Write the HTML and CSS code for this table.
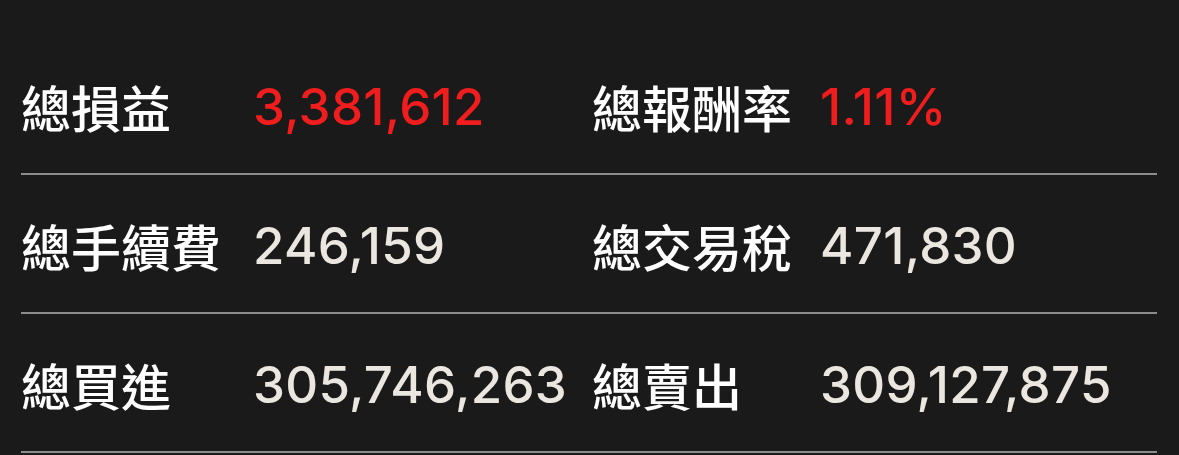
FILE: index.html
```html
<!DOCTYPE html>
<html lang="zh-Hant">

<head>
    <meta charset="UTF-8">
    <meta name="viewport" content="width=device-width, initial-scale=1.0">
    <title>交易統計</title>
    <link rel="stylesheet" href="styles.css">
</head>

<body>
    <div class="summary">
        <div class="row">
            <div class="label">總損益</div>
            <div class="value loss">3,381,612</div>
            <div class="label">總報酬率</div>
            <div class="value loss">1.11%</div>
        </div>
        <div class="row">
            <div class="label">總手續費</div>
            <div class="value">246,159</div>
            <div class="label">總交易稅</div>
            <div class="value">471,830</div>
        </div>
        <div class="row">
            <div class="label">總買進</div>
            <div class="value">305,746,263</div>
            <div class="label">總賣出</div>
            <div class="value">309,127,875</div>
        </div>
    </div>
</body>

</html>
```

FILE: styles.css
```css
body {
    margin: 0;
    background-color: #1a1a1a;
    font-family: 'Inter', 'Noto Sans CJK TC', sans-serif;
}

.summary {
    padding: 36px 22px 0 21px;
}

.row {
    display: grid;
    grid-template-columns: 232px 339px 228px 1fr;
    align-items: center;
    height: 137px;
    border-bottom: 2px solid #8c8c8c;
}

.label {
    font-family: 'Noto Sans CJK TC', sans-serif;
    font-size: 50px;
    font-weight: 500;
    color: #ffffff;
    white-space: nowrap;
    padding-top: 3px;
}

.value {
    font-size: 51px;
    font-weight: 500;
    letter-spacing: 0.3px;
    color: #ebe6df;
    white-space: nowrap;
    padding-top: 4px;
}

.value.loss {
    color: #ef1d1d;
}
```
